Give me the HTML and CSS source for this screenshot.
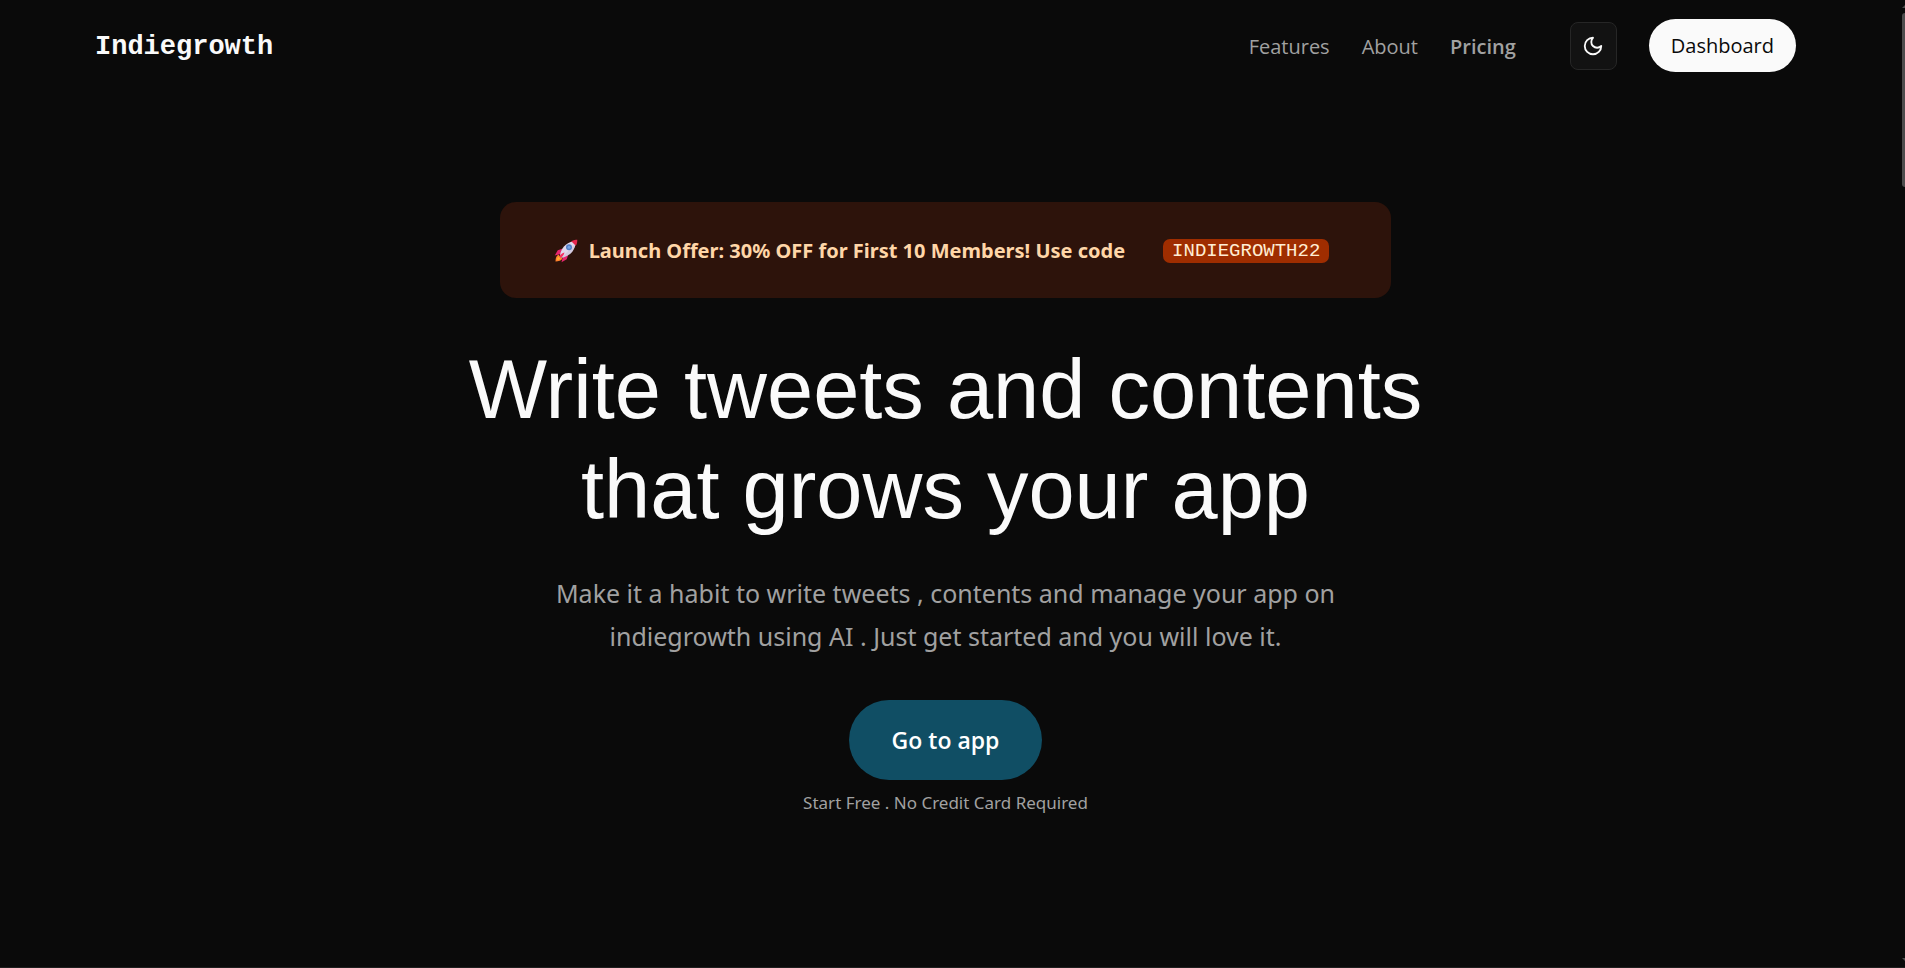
FILE: index.html
```html
<!DOCTYPE html>
<html lang="en">
<head>
<meta charset="utf-8">
<meta name="viewport" content="width=device-width, initial-scale=1">
<title>Indiegrowth</title>
<link rel="stylesheet" href="styles.css">
</head>
<body>
<div class="page">
  <header class="header">
    <a class="logo" href="#">Indiegrowth</a>
    <div class="header-right">
      <nav class="nav">
        <a class="nav-link" href="#features">Features</a>
        <a class="nav-link" href="#about">About</a>
        <a class="nav-link nav-link-strong" href="#pricing">Pricing</a>
      </nav>
      <button class="theme-toggle" type="button" aria-label="Toggle theme">
        <svg class="icon-moon" viewBox="0 0 24 24" aria-hidden="true"><path d="M12 3a6 6 0 0 0 9 9 9 9 0 1 1-9-9Z"/></svg>
      </button>
      <a class="dashboard" href="#dashboard">Dashboard</a>
    </div>
  </header>
  <main class="hero">
    <div class="offer">
      <svg class="rocket" viewBox="0 0 32 32" aria-hidden="true">
        <path fill="#ff822d" d="M2 30c0-4 1-8 4-9l5 5c-1 3-5 4-9 4Z"/>
        <path fill="#ffb02e" d="M4 28c0-2 1-4 3-5l2 2c-1 2-3 3-5 3Z"/>
        <path fill="#e5266f" d="M11 13 5 15l-4 7 8-2Zm8 8-2 6-7 4 2-8Z"/>
        <path fill="#e1d8ec" d="M8 22c1-9 7-17 18-19l3 3c-2 11-9 17-19 19Z"/>
        <path fill="#b4a9c8" d="m10 25 18-18c-2 11-8 16-18 18Z" opacity=".3"/>
        <path fill="#e5264f" d="M23 3c3-2 6-2 8-2 0 3 0 5-2 8Z"/>
        <circle cx="20" cy="11" r="4" fill="#537fc7"/>
        <circle cx="20" cy="11" r="2" fill="#74a4e8"/>
        <path fill="#f92f60" d="M14 18c-3 1-6 3-7 6l1 1c3-1 5-3 6-7Z"/>
      </svg>
      <span class="offer-text">Launch Offer: 30% OFF for First 10 Members! Use code</span>
      <code class="code">INDIEGROWTH22</code>
    </div>
    <h1 class="title">Write tweets and contents<br>that grows your app</h1>
    <p class="lead">Make it a habit to write tweets , contents and manage your app on<br>indiegrowth using AI . Just get started and you will love it.</p>
    <a class="cta" href="#app">Go to app</a>
    <p class="note">Start Free . No Credit Card Required</p>
  </main>
  <div class="scroll-rail" aria-hidden="true">
    <span class="scroll-up"></span>
    <span class="scroll-thumb"></span>
    <span class="scroll-down"></span>
  </div>
</div>
</body>
</html>
```
FILE: styles.css
```css
* {
  box-sizing: border-box;
}

body {
  margin: 0;
  background: #0a0a0a;
  color: #fafafa;
  font-family: "Noto Sans", "Open Sans", sans-serif;
}

a {
  color: inherit;
  text-decoration: none;
}

.page {
  position: relative;
  display: flex;
  flex-direction: column;
  min-height: 100vh;
  padding-right: 14px;
  border-bottom: 1px solid #1f1f1f;
  overflow: hidden;
}

.header {
  display: flex;
  align-items: center;
  justify-content: space-between;
  padding: 19px 95px;
}

.logo {
  padding-top: 2px;
  font: 700 27px/32px "Liberation Mono", monospace;
}

.header-right {
  display: flex;
  align-items: center;
  gap: 32px;
}

.nav {
  display: flex;
  gap: 32px;
  margin-right: 22px;
  padding-top: 2px;
  color: #a1a1a1;
  font-family: "Open Sans", sans-serif;
  font-size: 20px;
  line-height: 28px;
}

.nav-link-strong {
  font-weight: 600;
}

.theme-toggle {
  display: flex;
  align-items: center;
  justify-content: center;
  width: 47px;
  height: 48px;
  padding: 0;
  border: 1px solid #262626;
  border-radius: 8px;
  background: #121212;
  color: #fafafa;
}

.icon-moon {
  width: 22px;
  height: 22px;
  fill: none;
  stroke: currentColor;
  stroke-width: 2;
  stroke-linecap: round;
  stroke-linejoin: round;
}

.dashboard {
  padding: 13px 22px 12px;
  border-radius: 27px;
  background: #fafafa;
  color: #0a0a0a;
  font-family: "Open Sans", sans-serif;
  font-size: 20px;
  font-weight: 500;
  line-height: 28px;
}

.hero {
  display: flex;
  flex-direction: column;
  align-items: center;
  padding-top: 111px;
  text-align: center;
}

.offer {
  display: flex;
  align-items: center;
  padding: 35px 62px 33px 54px;
  border-radius: 16px;
  background: #2d130b;
}

.rocket {
  width: 24px;
  height: 24px;
  margin-right: 11px;
}

.offer-text {
  margin-right: 38px;
  color: #ffd6a8;
  font-size: 20px;
  font-weight: 700;
  line-height: 28px;
}

.code {
  padding: 0 9px;
  border-radius: 7px;
  background: #9f2d00;
  color: #ffedd4;
  font: 19px/24px "Liberation Mono", monospace;
}

.title {
  margin: 42px 0 0;
  font: 400 83px/100px "Liberation Sans", sans-serif;
}

.lead {
  margin: 32px 0 0;
  color: #a1a1a1;
  font-size: 25px;
  line-height: 43px;
}

.cta {
  margin-top: 42px;
  padding: 24px 43px;
  border-radius: 40px;
  background: #104e64;
  color: #ffffff;
  font-family: "Open Sans", sans-serif;
  font-size: 23px;
  font-weight: 600;
  line-height: 32px;
}

.note {
  margin: 9px 0 0;
  color: #a1a1a1;
  font-size: 17px;
  line-height: 28px;
}

.scroll-rail {
  position: absolute;
  top: 0;
  right: 0;
  bottom: 0;
  display: flex;
  flex-direction: column;
  width: 3px;
  overflow: hidden;
}

.scroll-up,
.scroll-down {
  width: 12px;
  height: 6px;
  margin-top: 2px;
  background: #4d4d4d;
  clip-path: polygon(50% 0, 100% 100%, 0 100%);
}

.scroll-thumb {
  width: 6px;
  height: 174px;
  margin-top: 5px;
  border-radius: 3px;
  background: #4d4d4d;
}

.scroll-down {
  margin-top: auto;
  margin-bottom: 3px;
  clip-path: polygon(0 0, 100% 0, 50% 100%);
}
```
